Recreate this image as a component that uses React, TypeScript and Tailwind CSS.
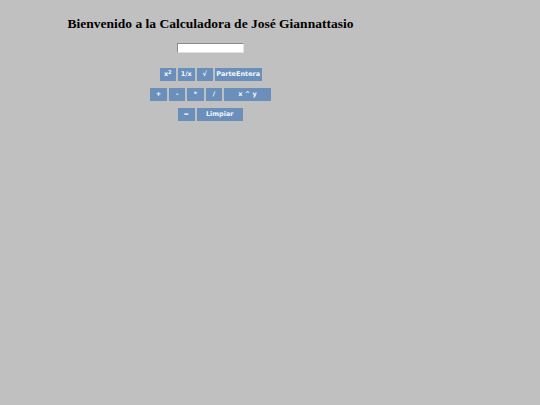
const btn =
  "h-[13px] bg-[#6a8fbb] text-[#f4f6fa] text-[6.5px] font-bold leading-[13px] text-center";

function Key({ label, wide }: { label: React.ReactNode; wide?: boolean }) {
  return (
    <button
      className={`${btn} ${wide ? "w-[46.5px]" : "w-[16.5px]"}`}
      style={{ fontFamily: '"DejaVu Sans", Verdana, sans-serif' }}
    >
      {label}
    </button>
  );
}

export default function App() {
  return (
    <div className="min-h-screen w-full bg-[#c0c0c0]">
      <div className="flex w-[421px] flex-col items-center pt-[14px]">
        <h1
          className="text-[13.5px] font-bold leading-[20px] text-black"
          style={{ fontFamily: '"Liberation Serif", "Times New Roman", serif' }}
        >
          Bienvenido a la Calculadora de José Giannattasio
        </h1>
        <input
          type="text"
          className="mt-[9px] h-[10px] w-[67px] border border-t-[#8a8a8a] border-l-[#8a8a8a] border-b-[#e0e0e0] border-r-[#e0e0e0] bg-white"
        />
        <div className="mt-[15px] flex gap-[2px]">
          <Key label={<>x<sup className="text-[5px]">2</sup></>} />
          <Key label="1/x" />
          <Key label="√" />
          <Key label="ParteEntera" wide />
        </div>
        <div className="mt-[7px] flex gap-[2px]">
          <Key label="+" />
          <Key label="-" />
          <Key label="*" />
          <Key label="/" />
          <Key label="x ^ y" wide />
        </div>
        <div className="mt-[7px] flex gap-[2px]">
          <Key label="=" />
          <Key label="Limpiar" wide />
        </div>
      </div>
    </div>
  );
}
